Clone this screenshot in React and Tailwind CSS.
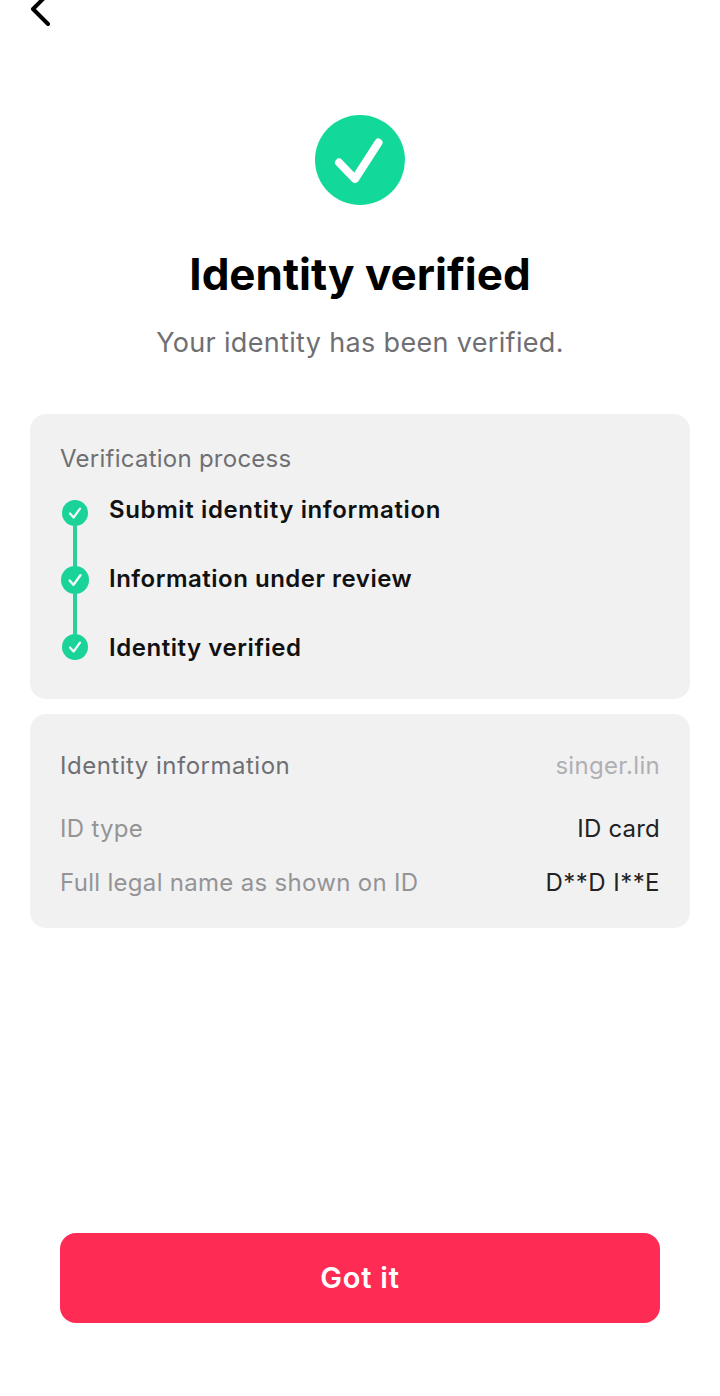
function Check({ size }) {
  return (
    <svg width={size} height={size} viewBox="0 0 26 26" fill="none" className="shrink-0">
      <circle cx="13" cy="13" r="13" fill="#19d398" />
      <path d="M8 13.5l3.6 4L18 8.6" stroke="#f2fffa" strokeWidth="2.2" strokeLinecap="round" strokeLinejoin="round" />
    </svg>
  );
}

function Line({ height }) {
  return <div className={`w-[4px] bg-[#2bcf9b] ${height}`} />;
}

function Row({ label, value, labelClass, valueClass }) {
  return (
    <div className="flex items-center justify-between">
      <span className={labelClass}>{label}</span>
      <span className={valueClass}>{value}</span>
    </div>
  );
}

export default function App() {
  return (
    <div className="flex h-[1396px] w-[720px] flex-col overflow-hidden bg-white font-['Inter',sans-serif]">
      <div className="-mt-[8px] pl-[28px]">
        <svg width="26" height="36" viewBox="0 0 26 36" fill="none">
          <path d="M20 2L5 17l15 15" stroke="#000" strokeWidth="4" strokeLinecap="round" strokeLinejoin="round" />
        </svg>
      </div>

      <div className="mt-[87px] flex flex-col items-center">
        <svg width="90" height="90" viewBox="0 0 90 90" fill="none">
          <circle cx="45" cy="45" r="45" fill="#12d999" />
          <path d="M24 47.500L40 64 63.500 27.500" stroke="#fff" strokeWidth="8" strokeLinecap="round" strokeLinejoin="round" />
        </svg>
        <h1 className="mt-[39px] text-[44px] leading-[60px] font-bold text-black">Identity verified</h1>
        <p className="mt-[21px] text-[27px] leading-[36px] tracking-[0.33px] text-[#6f6f72]">Your identity has been verified.</p>
      </div>

      <div className="mx-[30px] mt-[53px] h-[285px] rounded-[16px] bg-[#f1f1f2] px-[30px] pt-[30px]">
        <div className="text-[24px] leading-[30px] tracking-[0.25px] text-[#6f6f72]">Verification process</div>
        <div className="mt-[26px] flex">
          <div className="flex w-[30px] flex-col items-center">
            <Check size={26} />
            <Line height="h-[40px]" />
            <Check size={28} />
            <Line height="h-[40px]" />
            <Check size={26} />
          </div>
          <div className="-mt-[4px] ml-[19px] flex flex-col gap-[41px] text-[24px] leading-[28px] font-semibold text-[#111]">
            <span className="tracking-[0.62px]">Submit identity information</span>
            <span className="tracking-[0.5px]">Information under review</span>
            <span className="tracking-[0.55px]">Identity verified</span>
          </div>
        </div>
      </div>

      <div className="mx-[30px] mt-[15px] flex h-[214px] flex-col rounded-[16px] bg-[#f1f1f2] px-[30px] pt-[37px]">
        <Row
          label="Identity information"
          value="singer.lin"
          labelClass="text-[24px] leading-[30px] tracking-[0.5px] text-[#6f6f72]"
          valueClass="text-[24px] leading-[30px] tracking-[0.3px] text-[#b0b0b3]"
        />
        <div className="mt-[33px]">
          <Row
            label="ID type"
            value="ID card"
            labelClass="text-[24px] leading-[30px] tracking-[0.3px] text-[#949497]"
            valueClass="text-[24px] leading-[30px] tracking-[0.2px] text-[#222]"
          />
        </div>
        <div className="mt-[24px]">
          <Row
            label="Full legal name as shown on ID"
            value="D**D I**E"
            labelClass="text-[24px] leading-[30px] tracking-[0.3px] text-[#949497]"
            valueClass="text-[24px] leading-[30px] tracking-[0.45px] text-[#222]"
          />
        </div>
      </div>

      <button className="mx-[60px] mt-auto mb-[73px] h-[90px] rounded-[16px] bg-[#fe2c55] text-[29px] font-semibold tracking-[0.8px] text-white">
        Got it
      </button>
    </div>
  );
}
